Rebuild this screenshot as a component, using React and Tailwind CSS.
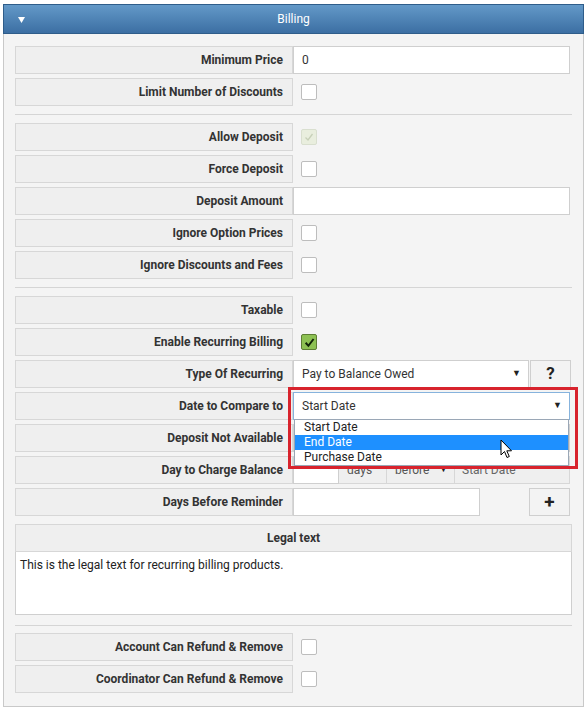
import React from 'react';

const Label = ({ children }) => (
    <div className="w-[278px] h-[28px] shrink-0 bg-[#efefef] border border-[#d7d7d7] flex items-center justify-end pr-[9px] text-[12px] font-bold text-[#333]">
        {children}
    </div>
);

const Check = ({ checked, disabled }) => {
    if (checked && disabled) {
        return (
            <div className="ml-[8px] w-[16px] h-[16px] rounded-[2px] border border-[#d9dfcf] bg-[#e9eede] flex items-center justify-center">
                <svg width="10" height="10" viewBox="0 0 10 10"><path d="M1.5 5.5 L4 8 L8.5 2" fill="none" stroke="#c7d0b8" strokeWidth="1.3" /></svg>
            </div>
        );
    }
    if (checked) {
        return (
            <div className="ml-[8px] w-[16px] h-[16px] rounded-[2px] border border-[#5d7d34] bg-[#8dc153] flex items-center justify-center">
                <svg width="11" height="11" viewBox="0 0 10 10"><path d="M1.5 5.2 L4 8 L8.7 1.8" fill="none" stroke="#13250a" strokeWidth="1.8" /></svg>
            </div>
        );
    }
    return <div className="ml-[8px] w-[16px] h-[16px] rounded-[2px] border border-[#bdbdbd] bg-white" />;
};

const Row = ({ label, children }) => (
    <div className="flex items-center h-[28px]">
        <Label>{label}</Label>
        {children}
    </div>
);

const Sep = ({ className = '' }) => <div className={'h-px bg-[#d5d5d5] ' + className} />;

const Arrow = () => <span className="text-[9px] text-[#222]">▼</span>;

export default function App() {
    return (
        <div className="min-h-[711px] bg-white pt-[4px] px-[3px] font-[Roboto,sans-serif]">
            <div className="w-[581px] border border-[#c9c9c9] bg-[#f4f4f4]">
                <div className="h-[30px] -m-px mb-0 border border-[#2f5d8a] bg-gradient-to-b from-[#6399c8] to-[#3c6fa3] flex items-center relative">
                    <svg className="absolute left-[14px] top-[12px]" width="7" height="6" viewBox="0 0 7 6"><path d="M0 0 L7 0 L3.5 6 Z" fill="white" /></svg>
                    <span className="w-full text-center text-white text-[12px]">Billing</span>
                </div>

                <div className="px-[11px] pt-[12px] pb-[13px] flex flex-col">
                    <div className="flex flex-col gap-[4px]">
                        <Row label="Minimum Price">
                            <div className="w-[277px] h-[28px] bg-white border border-[#cfcfcf] flex items-center px-[8px] text-[12px] text-[#333]">0</div>
                        </Row>
                        <Row label="Limit Number of Discounts"><Check /></Row>
                    </div>

                    <Sep className="my-[8px]" />

                    <div className="flex flex-col gap-[4px]">
                        <Row label="Allow Deposit"><Check checked disabled /></Row>
                        <Row label="Force Deposit"><Check /></Row>
                        <Row label="Deposit Amount">
                            <div className="w-[277px] h-[28px] bg-white border border-[#cfcfcf]" />
                        </Row>
                        <Row label="Ignore Option Prices"><Check /></Row>
                        <Row label="Ignore Discounts and Fees"><Check /></Row>
                    </div>

                    <Sep className="my-[8px]" />

                    <div className="flex flex-col gap-[4px]">
                        <Row label="Taxable"><Check /></Row>
                        <Row label="Enable Recurring Billing"><Check checked /></Row>
                        <Row label="Type Of Recurring">
                            <div className="w-[236px] h-[28px] bg-white border border-[#cfcfcf] flex items-center justify-between pl-[8px] pr-[7px] text-[12px] text-[#333]">
                                <span>Pay to Balance Owed</span>
                                <Arrow />
                            </div>
                            <div className="ml-[1px] w-[41px] h-[28px] bg-[#f3f3f3] border border-[#cfcfcf] flex items-center justify-center text-[17px] font-bold text-[#222]">?</div>
                        </Row>
                        <Row label="Date to Compare to">
                            <div className="relative w-[277px] h-[28px]">
                                <div className="w-full h-full bg-white border border-[#86b3dd] flex items-center justify-between pl-[8px] pr-[7px] text-[12px] text-[#333]">
                                    <span>Start Date</span>
                                    <Arrow />
                                </div>
                                <div className="absolute left-[1px] top-[27px] w-[275px] z-10 bg-white border border-[#9aa7b6] text-[12px] text-[#222]">
                                    <div className="h-[15px] leading-[15px] pl-[9px]">Start Date</div>
                                    <div className="h-[15px] leading-[15px] pl-[9px] bg-[#1e90ff] text-white">End Date</div>
                                    <div className="h-[15px] leading-[15px] pl-[9px]">Purchase Date</div>
                                </div>
                                <div className="absolute left-[-5px] top-[-5px] w-[290px] h-[82px] border-[3px] border-[#d8232d] z-20" />
                                <svg className="absolute left-[207px] top-[47px] z-30" width="13" height="20" viewBox="0 0 13 20">
                                    <path d="M1 1 L1 16 L4.5 12.5 L7 18.5 L9.3 17.5 L6.8 11.8 L11.5 11.8 Z" fill="white" stroke="black" strokeWidth="1" strokeLinejoin="round" />
                                </svg>
                            </div>
                        </Row>
                        <Row label="Deposit Not Available">
                            <div className="w-[277px] h-[28px] bg-white border border-[#cfcfcf]" />
                        </Row>
                        <Row label="Day to Charge Balance">
                            <div className="w-[46px] h-[28px] bg-white border border-[#cfcfcf]" />
                            <div className="w-[47px] h-[28px] bg-[#efefef] border-y border-[#d7d7d7] flex items-center pl-[8px] text-[12px] text-[#555]">days</div>
                            <div className="w-[69px] h-[28px] bg-[#efefef] border border-[#d7d7d7] flex items-center justify-between pl-[8px] pr-[6px] text-[12px] text-[#555]">
                                <span>before</span>
                                <Arrow />
                            </div>
                            <div className="w-[115px] h-[28px] bg-[#efefef] border-y border-r border-[#d7d7d7] flex items-center pl-[7px] text-[12px] text-[#666]">Start Date</div>
                        </Row>
                        <Row label="Days Before Reminder">
                            <div className="w-[187px] h-[28px] bg-white border border-[#cfcfcf]" />
                            <div className="ml-[49px] w-[41px] h-[28px] bg-[#f3f3f3] border border-[#cfcfcf] flex items-center justify-center text-[19px] font-bold text-[#222]">+</div>
                        </Row>
                    </div>

                    <div className="mt-[8px] flex flex-col">
                        <div className="h-[28px] bg-[#efefef] border border-[#d7d7d7] flex items-center justify-center text-[12px] font-bold text-[#333]">Legal text</div>
                        <div className="h-[63px] bg-white border border-t-0 border-[#cfcfcf] px-[4px] pt-[4px] text-[12px] text-[#222]">
                            This is the legal text for recurring billing products.
                        </div>
                    </div>

                    <Sep className="mt-[10px] mb-[7px]" />

                    <div className="flex flex-col gap-[4px]">
                        <Row label="Account Can Refund & Remove"><Check /></Row>
                        <Row label="Coordinator Can Refund & Remove"><Check /></Row>
                    </div>
                </div>
            </div>
        </div>
    );
}
